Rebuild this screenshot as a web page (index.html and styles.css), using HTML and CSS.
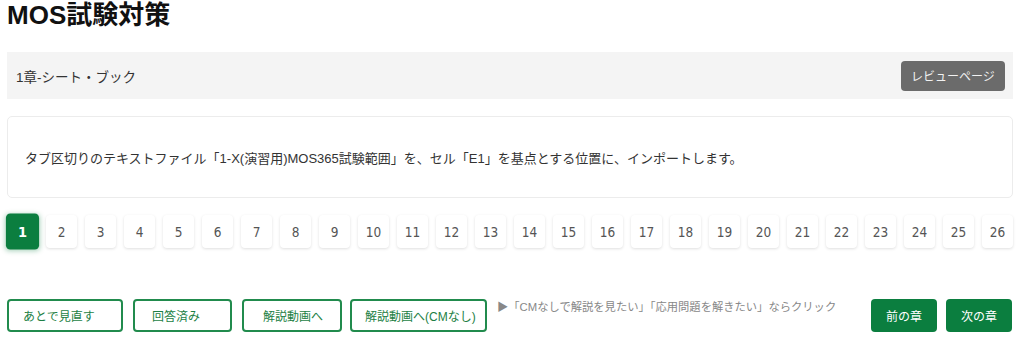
FILE: index.html
```html
<!DOCTYPE html>
<html lang="ja">
<head>
    <meta charset="UTF-8">
    <meta name="viewport" content="width=device-width, initial-scale=1.0">
    <title>MOS試験対策</title>
    <link rel="stylesheet" href="styles.css">
</head>
<body>
    <div class="container">
        <h1>MOS試験対策</h1>

        <div class="chapter-bar">
            <span class="chapter-name">1章-シート・ブック</span>
            <a class="review-btn" href="#">レビューページ</a>
        </div>

        <div class="question">
            <p>タブ区切りのテキストファイル「1-X(演習用)MOS365試験範囲」を、セル「E1」を基点とする位置に、インポートします。</p>
        </div>

        <div class="pager">
            <a class="page active" href="#">1</a>
            <a class="page" href="#">2</a>
            <a class="page" href="#">3</a>
            <a class="page" href="#">4</a>
            <a class="page" href="#">5</a>
            <a class="page" href="#">6</a>
            <a class="page" href="#">7</a>
            <a class="page" href="#">8</a>
            <a class="page" href="#">9</a>
            <a class="page" href="#">10</a>
            <a class="page" href="#">11</a>
            <a class="page" href="#">12</a>
            <a class="page" href="#">13</a>
            <a class="page" href="#">14</a>
            <a class="page" href="#">15</a>
            <a class="page" href="#">16</a>
            <a class="page" href="#">17</a>
            <a class="page" href="#">18</a>
            <a class="page" href="#">19</a>
            <a class="page" href="#">20</a>
            <a class="page" href="#">21</a>
            <a class="page" href="#">22</a>
            <a class="page" href="#">23</a>
            <a class="page" href="#">24</a>
            <a class="page" href="#">25</a>
            <a class="page" href="#">26</a>
        </div>

        <div class="actions">
            <a class="outline-btn w-later" href="#">あとで見直す</a>
            <a class="outline-btn w-done" href="#">回答済み</a>
            <a class="outline-btn w-video" href="#">解説動画へ</a>
            <a class="outline-btn w-nocm" href="#">解説動画へ(CMなし)</a>
            <p class="note">▶「CMなしで解説を見たい」「応用問題を解きたい」ならクリック</p>
            <div class="chapter-nav">
                <a class="green-btn" href="#">前の章</a>
                <a class="green-btn" href="#">次の章</a>
            </div>
        </div>
    </div>
</body>
</html>
```

FILE: styles.css
```css
body {
    margin: 0;
    background: #fff;
    color: #222;
    font-family: "Liberation Sans", Arial, "Noto Sans CJK JP", sans-serif;
}

a {
    text-decoration: none;
}

.container {
    margin: 0 11px 0 7px;
}

h1 {
    margin: 0 0 22px;
    font-size: 26px;
    line-height: 30px;
    font-weight: bold;
    color: #111;
}

.chapter-bar {
    display: flex;
    align-items: center;
    justify-content: space-between;
    height: 47px;
    padding: 0 8px 0 9px;
    background: #f4f4f4;
}

.chapter-name {
    font-size: 13.5px;
    color: #333;
}

.review-btn {
    display: flex;
    align-items: center;
    justify-content: center;
    width: 104px;
    height: 30px;
    border-radius: 4px;
    background: #6b6b6b;
    color: #f2f2f2;
    font-size: 12px;
}

.question {
    display: flex;
    align-items: center;
    height: 80px;
    margin-top: 17px;
    padding: 0 17px;
    border: 1px solid #ececec;
    border-radius: 5px;
}

.question p {
    margin: 0;
    font-size: 13px;
    color: #333;
}

.pager {
    display: flex;
    align-items: center;
    gap: 8px;
    margin-top: 17px;
}

.page {
    display: flex;
    align-items: center;
    justify-content: center;
    width: 31px;
    height: 33px;
    border-radius: 4px;
    background: #fff;
    box-shadow: 0 1px 3px rgba(0, 0, 0, 0.13);
    font-family: "DejaVu Sans Condensed", "DejaVu Sans", sans-serif;
    font-size: 13.5px;
    color: #555;
}

.page.active {
    background: #0b7e3f;
    color: #fff;
    font-weight: bold;
    transform: scale(1.07, 1.09);
    box-shadow: 0 1px 5px rgba(11, 126, 63, 0.35);
}

.actions {
    display: flex;
    align-items: flex-start;
    margin-top: 51px;
}

.outline-btn {
    box-sizing: border-box;
    display: flex;
    align-items: center;
    height: 33px;
    margin-right: 10px;
    border: 2px solid #218b4d;
    border-radius: 4px;
    color: #1d7f45;
    font-size: 12px;
    white-space: nowrap;
}

.w-later { width: 116px; padding-left: 14px; }
.w-done  { width: 99px;  padding-left: 17px; }
.w-video { width: 100px; padding-left: 19px; margin-right: 8px; }
.w-nocm  { width: 137px; padding-left: 13px; }

.note {
    margin: 1px 0 0;
    font-size: 11.3px;
    line-height: 14px;
    color: #888;
    white-space: nowrap;
}

.chapter-nav {
    display: flex;
    gap: 9px;
    margin-left: auto;
    margin-right: 1px;
}

.green-btn {
    display: flex;
    align-items: center;
    justify-content: center;
    width: 66px;
    height: 33px;
    border-radius: 4px;
    background: #0b7e3f;
    color: #fff;
    font-size: 12px;
}
```
